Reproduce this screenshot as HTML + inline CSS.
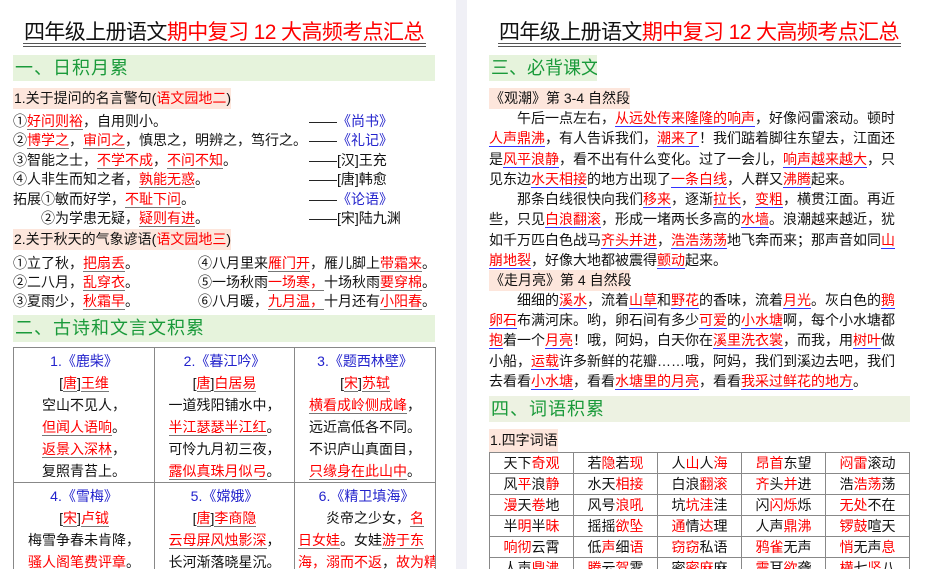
<!DOCTYPE html>
<html><head><meta charset="utf-8"><style>
*{margin:0;padding:0;box-sizing:border-box}
html,body{width:929px;height:569px;overflow:hidden}
body{background:#fff;font-family:"Liberation Sans","Noto Sans CJK SC",sans-serif;color:#111;position:relative}
.gap{position:absolute;left:456px;top:0;width:11px;height:569px;background:#f0f0f6}
.t{position:absolute;font-size:21px;white-space:nowrap;line-height:26px;letter-spacing:-0.6px}
.t b{font-weight:normal;color:#f00}
.tu{position:absolute;height:4px;border-top:1.5px solid #555;border-bottom:1.5px solid #555}
.sec{position:absolute;height:26px;background:#e6f3dc;color:#1a9a3a;font-size:18px;line-height:26px;padding-left:2px;letter-spacing:1px;white-space:nowrap;overflow:hidden}
.sub{position:absolute;height:21px;background:#fde6dc;font-size:14px;line-height:21px;padding-left:1px;white-space:nowrap}
.l{position:absolute;font-size:14px;line-height:20px;white-space:nowrap}
.r{color:#f00}
.u{color:#f00;border-bottom:1px solid #777}
.v{color:#f00;border-bottom:1px solid #33f}
.bl{color:#22c}
table{position:absolute;border-collapse:collapse;table-layout:fixed}
.pt td{border:1px solid #888;vertical-align:top;text-align:center;font-size:14px;line-height:22px;padding-top:2px;white-space:nowrap;overflow:hidden}
.wt td{border:1px solid #888;text-align:center;font-size:14px;height:21px;line-height:20px;white-space:nowrap}
</style></head><body>
<div class="gap"></div>

<!-- LEFT PAGE -->
<div class="t" style="left:24px;top:20px">四年级上册语文<b>期中复习 12 大高频考点汇总</b></div>
<div class="tu" style="left:23px;top:43px;width:403px"></div>
<div class="sec" style="left:13px;top:55px;width:422px">一、日积月累</div>
<div class="sub" style="left:13px;top:88px">1.关于提问的名言警句(<span class="r">语文园地二</span>)</div>
<div class="l" style="left:13px;top:111px">①<span class="u">好问则裕</span>，自用则小。</div>
<div class="l" style="left:13px;top:130px">②<span class="u">博学之</span>，<span class="u">审问之</span>，慎思之，明辨之，笃行之。</div>
<div class="l" style="left:13px;top:150px">③智能之士，<span class="u">不学不成</span>，<span class="u">不问不知</span>。</div>
<div class="l" style="left:13px;top:169px">④人非生而知之者，<span class="u">孰能无惑</span>。</div>
<div class="l" style="left:13px;top:189px">拓展①敏而好学，<span class="u">不耻下问</span>。</div>
<div class="l" style="left:41px;top:208px">②为学患无疑，<span class="u">疑则有进</span>。</div>
<div class="l" style="left:309px;top:111px">——<span class="bl">《尚书》</span></div>
<div class="l" style="left:309px;top:130px">——<span class="bl">《礼记》</span></div>
<div class="l" style="left:309px;top:150px">——[汉]王充</div>
<div class="l" style="left:309px;top:169px">——[唐]韩愈</div>
<div class="l" style="left:309px;top:189px">——<span class="bl">《论语》</span></div>
<div class="l" style="left:309px;top:208px">——[宋]陆九渊</div>
<div class="sub" style="left:13px;top:229px">2.关于秋天的气象谚语(<span class="r">语文园地三</span>)</div>
<div class="l" style="left:13px;top:253px">①立了秋，<span class="u">把扇丢</span>。</div>
<div class="l" style="left:13px;top:272px">②二八月，<span class="u">乱穿衣</span>。</div>
<div class="l" style="left:13px;top:291px">③夏雨少，<span class="u">秋霜早</span>。</div>
<div class="l" style="left:198px;top:253px">④八月里来<span class="u">雁门开</span>，雁儿脚上<span class="u">带霜来</span>。</div>
<div class="l" style="left:198px;top:272px">⑤一场秋雨<span class="u">一场寒，</span>十场秋雨<span class="u">要穿棉</span>。</div>
<div class="l" style="left:198px;top:291px">⑥八月暖，<span class="u">九月温，</span>十月还有<span class="u">小阳春</span>。</div>
<div class="sec" style="left:13px;top:315px;width:422px;height:27px">二、古诗和文言文积累</div>
<table class="pt" style="left:13px;top:347px;width:422px">
<colgroup><col style="width:141px"><col style="width:140px"><col style="width:141px"></colgroup>
<tr style="height:133px"><td><span class="bl">1.《鹿柴》</span><br>[<span class="u">唐</span>]<span class="u">王维</span><br>空山不见人，<br><span class="u">但闻人语响</span>。<br><span class="u">返景入深林</span>，<br>复照青苔上。</td>
<td><span class="bl">2.《暮江吟》</span><br>[<span class="u">唐</span>]<span class="u">白居易</span><br>一道残阳铺水中，<br><span class="u">半江瑟瑟半江红</span>。<br>可怜九月初三夜，<br><span class="u">露似真珠月似弓</span>。</td>
<td><span class="bl">3.《题西林壁》</span><br>[<span class="u">宋</span>]<span class="u">苏轼</span><br><span class="u">横看成岭侧成峰</span>，<br>远近高低各不同。<br>不识庐山真面目，<br><span class="u">只缘身在此山中</span>。</td></tr>
<tr style="height:100px"><td><span class="bl">4.《雪梅》</span><br>[<span class="u">宋</span>]<span class="u">卢钺</span><br>梅雪争春未肯降，<br><span class="u">骚人阁笔费评章</span>。</td>
<td><span class="bl">5.《嫦娥》</span><br>[<span class="u">唐</span>]<span class="u">李商隐</span><br><span class="u">云母屏风烛影深</span>，<br>长河渐落晓星沉。</td>
<td style="text-align:left;padding-left:3px"><div style="text-align:center"><span class="bl">6.《精卫填海》</span></div><div style="padding-left:28px">炎帝之少女，<span class="u">名</span></div><div><span class="u">日女娃</span>。女娃<span class="u">游于东</span></div><div><span class="u">海，溺而不返</span>，<span class="u">故为精</span></div></td></tr>
</table>

<!-- RIGHT PAGE -->
<div class="t" style="left:499px;top:20px">四年级上册语文<b>期中复习 12 大高频考点汇总</b></div>
<div class="tu" style="left:498px;top:43px;width:403px"></div>
<div class="sec" style="left:489px;top:55px;width:108px;letter-spacing:0">三、必背课文</div>
<div class="sub" style="left:489px;top:88px;width:141px">《观潮》第 3-4 自然段</div>
<div class="l" style="left:517px;top:108px">午后一点左右，<span class="v">从远处传来隆隆的响声</span>，好像闷雷滚动。顿时</div>
<div class="l" style="left:489px;top:128px"><span class="v">人声鼎沸</span>，有人告诉我们，<span class="v">潮来了</span>！我们踮着脚往东望去，江面还</div>
<div class="l" style="left:489px;top:149px">是<span class="v">风平浪静</span>，看不出有什么变化。过了一会儿，<span class="v">响声越来越大</span>，只</div>
<div class="l" style="left:489px;top:169px">见东边<span class="v">水天相接</span>的地方出现了<span class="v">一条白线</span>，人群又<span class="v">沸腾</span>起来。</div>
<div class="l" style="left:517px;top:189px">那条白线很快向我们<span class="v">移来</span>，逐渐<span class="v">拉长</span>，<span class="v">变粗</span>，横贯江面。再近</div>
<div class="l" style="left:489px;top:209px">些，只见<span class="v">白浪翻滚</span>，形成一堵两长多高的<span class="v">水墙</span>。浪潮越来越近，犹</div>
<div class="l" style="left:489px;top:230px">如千万匹白色战马<span class="v">齐头并进</span>，<span class="v">浩浩荡荡</span>地飞奔而来；那声音如同<span class="v">山</span></div>
<div class="l" style="left:489px;top:250px"><span class="v">崩地裂</span>，好像大地都被震得<span class="v">颤动</span>起来。</div>
<div class="sub" style="left:489px;top:270px;width:141px">《走月亮》第 4 自然段</div>
<div class="l" style="left:517px;top:290px">细细的<span class="v">溪水</span>，流着<span class="v">山草</span>和<span class="v">野花</span>的香味，流着<span class="v">月光</span>。灰白色的<span class="v">鹅</span></div>
<div class="l" style="left:489px;top:310px"><span class="v">卵石</span>布满河床。哟，卵石间有多少<span class="v">可爱</span>的<span class="v">小水塘</span>啊，每个小水塘都</div>
<div class="l" style="left:489px;top:330px"><span class="v">抱</span>着一个<span class="v">月亮</span>！哦，阿妈，白天你在<span class="v">溪里洗衣裳</span>，而我，用<span class="v">树叶</span>做</div>
<div class="l" style="left:489px;top:351px">小船，<span class="v">运载</span>许多新鲜的花瓣……哦，阿妈，我们到溪边去吧，我们</div>
<div class="l" style="left:489px;top:371px">去看看<span class="v">小水塘</span>，看看<span class="v">水塘里的月亮</span>，看看<span class="v">我采过鲜花的地方</span>。</div>
<div class="sec" style="left:489px;top:396px;width:421px;background:#edf2e2">四、词语积累</div>
<div class="sub" style="left:489px;top:429px;width:69px;height:23px;line-height:23px">1.四字词语</div>
<table class="wt" style="left:489px;top:452px;width:421px">
<tr><td>天下<span class="r">奇观</span></td><td>若<span class="r">隐</span>若<span class="r">现</span></td><td>人<span class="r">山</span>人<span class="r">海</span></td><td><span class="r">昂首</span>东望</td><td><span class="r">闷雷</span>滚动</td></tr>
<tr><td>风<span class="r">平</span>浪<span class="r">静</span></td><td>水天<span class="r">相接</span></td><td>白浪<span class="r">翻滚</span></td><td><span class="r">齐</span>头<span class="r">并</span>进</td><td>浩<span class="r">浩荡</span>荡</td></tr>
<tr><td><span class="r">漫</span>天<span class="r">卷</span>地</td><td>风号<span class="r">浪吼</span></td><td>坑<span class="r">坑洼</span>洼</td><td>闪<span class="r">闪烁</span>烁</td><td><span class="r">无处</span>不在</td></tr>
<tr><td>半<span class="r">明</span>半<span class="r">昧</span></td><td>摇摇<span class="r">欲坠</span></td><td><span class="r">通</span>情<span class="r">达</span>理</td><td>人声<span class="r">鼎沸</span></td><td><span class="r">锣鼓</span>喧天</td></tr>
<tr><td><span class="r">响彻</span>云霄</td><td>低<span class="r">声</span>细<span class="r">语</span></td><td><span class="r">窃窃</span>私语</td><td><span class="r">鸦雀</span>无声</td><td><span class="r">悄</span>无声<span class="r">息</span></td></tr>
<tr><td>人声<span class="r">鼎沸</span></td><td><span class="r">腾</span>云<span class="r">驾</span>雾</td><td>密<span class="r">密麻</span>麻</td><td><span class="r">震</span>耳<span class="r">欲</span>聋</td><td><span class="r">横</span>七<span class="r">竖</span>八</td></tr>
</table>
</body></html>
